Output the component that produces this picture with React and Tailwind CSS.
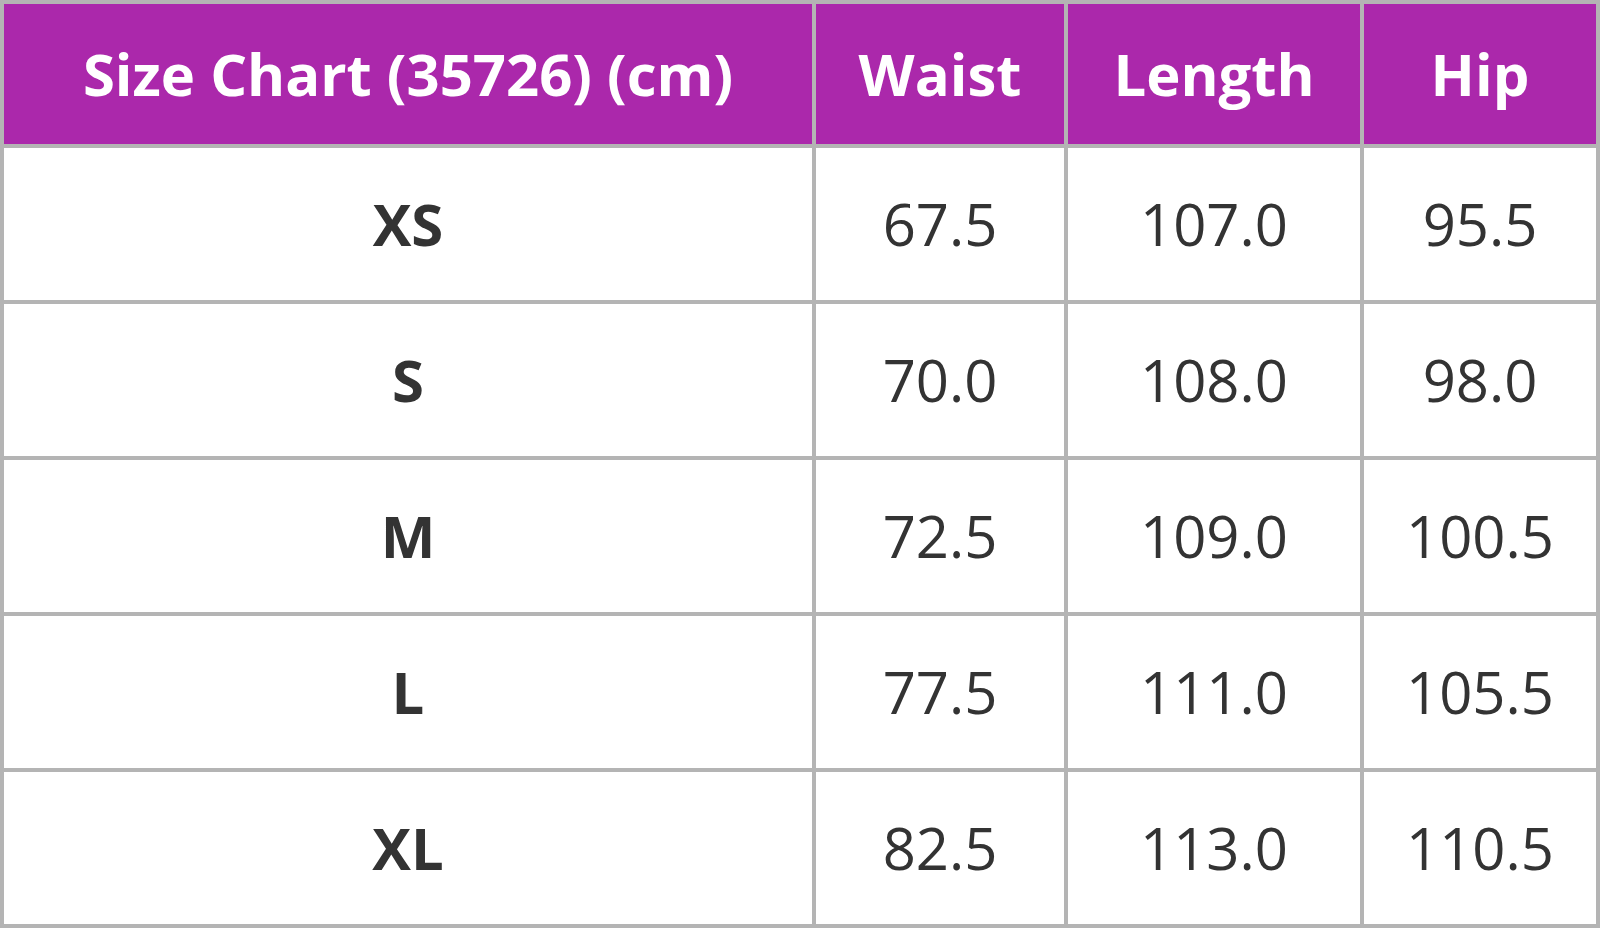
export default function App() {
  const header = ["Size Chart (35726) (cm)", "Waist", "Length", "Hip"];
  const rows = [
    ["XS", "67.5", "107.0", "95.5"],
    ["S", "70.0", "108.0", "98.0"],
    ["M", "72.5", "109.0", "100.5"],
    ["L", "77.5", "111.0", "105.5"],
    ["XL", "82.5", "113.0", "110.5"],
  ];

  return (
    <div
      className="w-[1600px] h-[928px] bg-[#b4b4b4] p-1 grid grid-cols-[808px_248px_292px_232px] grid-rows-[140px_repeat(5,152px)] gap-1"
      style={{ fontFamily: '"Open Sans", "Noto Sans", sans-serif' }}
    >
      {header.map((h) => (
        <div
          key={h}
          className="bg-[#ab28ab] flex items-center justify-center text-white font-bold text-[58px] leading-none"
        >
          {h}
        </div>
      ))}
      {rows.map((row) =>
        row.map((cell, i) => (
          <div
            key={row[0] + i}
            className={
              "bg-white flex items-center justify-center text-[#333333] text-[58px] leading-none " +
              (i === 0 ? "font-bold" : "font-normal")
            }
          >
            {cell}
          </div>
        ))
      )}
    </div>
  );
}
